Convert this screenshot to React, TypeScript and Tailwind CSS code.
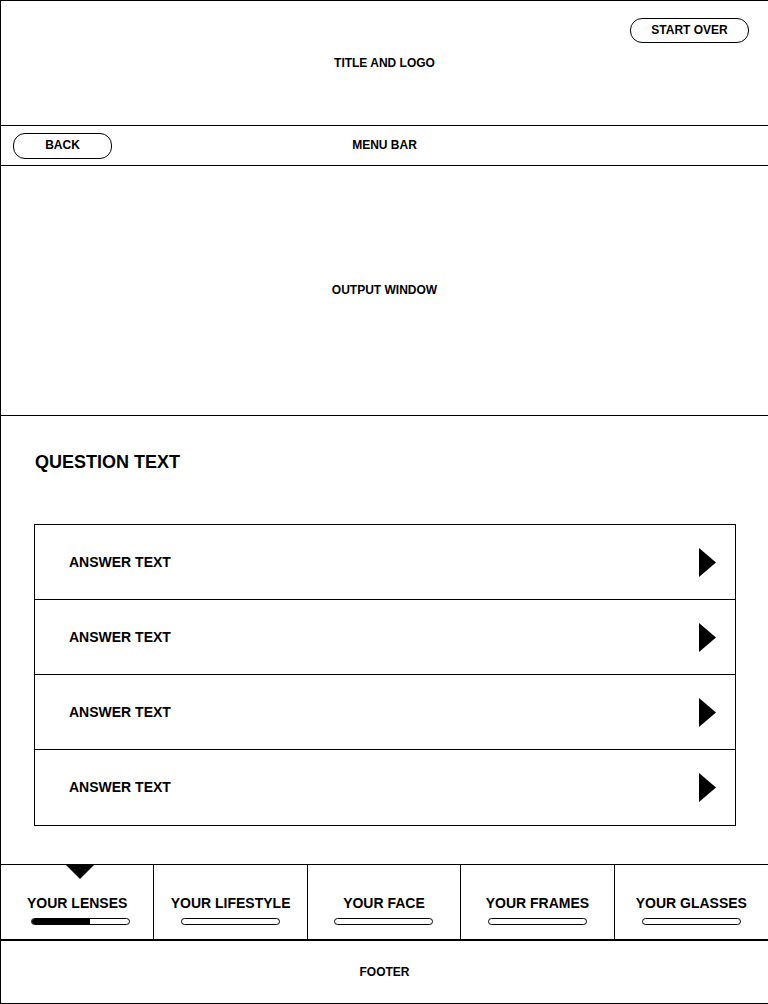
const tabs = [
  { label: "YOUR LENSES", progress: 60, active: true },
  { label: "YOUR LIFESTYLE", progress: 0, active: false },
  { label: "YOUR FACE", progress: 0, active: false },
  { label: "YOUR FRAMES", progress: 0, active: false },
  { label: "YOUR GLASSES", progress: 0, active: false },
];

const answers = ["ANSWER TEXT", "ANSWER TEXT", "ANSWER TEXT", "ANSWER TEXT"];

function Arrow() {
  return (
    <svg width="17" height="29" viewBox="0 0 17 29" className="shrink-0">
      <polygon points="0,0 17,14.5 0,29" fill="#000" />
    </svg>
  );
}

export default function App() {
  return (
    <div className="w-[768px] h-[1004px] bg-white text-black border-l border-t border-black font-['Liberation_Sans',Arial,sans-serif] font-bold flex flex-col overflow-hidden">
      {/* header */}
      <div className="h-[125px] border-b border-black flex flex-col pt-[17px] shrink-0">
        <div className="flex justify-end pr-[19px]">
          <button className="w-[119px] h-[25px] rounded-[12px] border border-black text-[12px] leading-none pb-[1px]">
            START OVER
          </button>
        </div>
        <div className="mt-[13px] text-center text-[12px] leading-[14px]">TITLE AND LOGO</div>
      </div>

      {/* menu bar */}
      <div className="h-[40px] border-b border-black grid grid-cols-3 items-center shrink-0">
        <div className="pl-[12px]">
          <button className="w-[99px] h-[26px] rounded-[12px] border border-black text-[12px] leading-none pb-[1px]">
            BACK
          </button>
        </div>
        <div className="text-center text-[12px] pb-[1px]">MENU BAR</div>
        <div />
      </div>

      {/* output window */}
      <div className="h-[250px] border-b border-black flex items-center justify-center text-[12px] pb-[1px] shrink-0">
        OUTPUT WINDOW
      </div>

      {/* question */}
      <div className="h-[448px] pt-[34px] shrink-0">
        <h1 className="ml-[34px] text-[18px] leading-[24px]">QUESTION TEXT</h1>
        <div className="mt-[50px] ml-[33px] w-[702px] border border-black divide-y divide-black">
          {answers.map((a, i) => (
            <div key={i} className="h-[75px] flex items-center justify-between pl-[34px] pr-[19px]">
              <span className="text-[14px]">{a}</span>
              <Arrow />
            </div>
          ))}
        </div>
      </div>

      {/* progress tabs */}
      <div className="h-[77px] border-t border-b-2 border-black grid grid-cols-5 shrink-0">
        {tabs.map((t, i) => (
          <div
            key={t.label}
            className={`relative flex flex-col items-center pt-[30px] ${i < tabs.length - 1 ? "border-r border-black" : ""}`}
          >
            {t.active && (
              <svg width="28" height="14" viewBox="0 0 28 14" className="absolute top-0 left-[65px]">
                <polygon points="0,0 28,0 14,14" fill="#000" />
              </svg>
            )}
            <span className="text-[14px] leading-[16px] whitespace-nowrap">{t.label}</span>
            <div
              className={`mt-[7px] w-[99px] h-[7px] rounded-full border border-black overflow-hidden ${i === 0 ? "ml-[6px]" : ""}`}
            >
              <div className="h-full bg-black" style={{ width: `${t.progress}%` }} />
            </div>
          </div>
        ))}
      </div>

      {/* footer */}
      <div className="h-[63px] border-b border-black flex items-center justify-center text-[12px] shrink-0">
        FOOTER
      </div>
    </div>
  );
}
